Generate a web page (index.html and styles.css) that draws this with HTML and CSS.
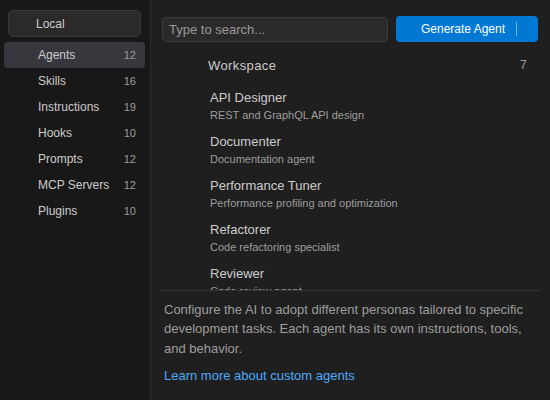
FILE: index.html
```html
<!DOCTYPE html>
<html lang="en">
<head>
  <meta charset="UTF-8" />
  <title>Agents</title>
  <link rel="stylesheet" href="styles.css">
</head>
<body>

  <aside class="sidebar">
    <div class="source">Local</div>
    <ul class="nav">
      <li class="nav-item active"><span>Agents</span><span class="count">12</span></li>
      <li class="nav-item"><span>Skills</span><span class="count">16</span></li>
      <li class="nav-item"><span>Instructions</span><span class="count">19</span></li>
      <li class="nav-item"><span>Hooks</span><span class="count">10</span></li>
      <li class="nav-item"><span>Prompts</span><span class="count">12</span></li>
      <li class="nav-item"><span>MCP Servers</span><span class="count">12</span></li>
      <li class="nav-item"><span>Plugins</span><span class="count">10</span></li>
    </ul>
  </aside>

  <main class="content">
    <div class="toolbar">
      <input class="search" type="text" placeholder="Type to search...">
      <button class="generate">
        <span class="generate-label">Generate Agent</span>
        <span class="generate-drop"></span>
      </button>
    </div>

    <div class="list">
      <div class="group-head">
        <span>Workspace</span>
        <span class="group-count">7</span>
      </div>
      <div class="agent">
        <div class="agent-name">API Designer</div>
        <div class="agent-desc">REST and GraphQL API design</div>
      </div>
      <div class="agent">
        <div class="agent-name">Documenter</div>
        <div class="agent-desc">Documentation agent</div>
      </div>
      <div class="agent">
        <div class="agent-name">Performance Tuner</div>
        <div class="agent-desc">Performance profiling and optimization</div>
      </div>
      <div class="agent">
        <div class="agent-name">Refactorer</div>
        <div class="agent-desc">Code refactoring specialist</div>
      </div>
      <div class="agent">
        <div class="agent-name">Reviewer</div>
        <div class="agent-desc">Code review agent</div>
      </div>
    </div>

    <div class="about">
      <p>Configure the AI to adopt different personas tailored to specific development tasks. Each agent has its own instructions, tools, and behavior.</p>
      <a href="#" class="learn">Learn more about custom agents</a>
    </div>
  </main>

</body>
</html>
```

FILE: styles.css
```css
body {
  margin: 0;
  display: flex;
  height: 400px;
  overflow: hidden;
  background: #1f1f1f;
  color: #cccccc;
  font-family: 'Liberation Sans', Arial, sans-serif;
}

/* left column */
.sidebar {
  width: 151px;
  flex-shrink: 0;
  box-sizing: border-box;
  padding: 10px 5px 10px 4px;
  background: #181818;
  border-right: 1px solid #2b2b2b;
}

.source {
  margin: 0 4px;
  height: 27px;
  box-sizing: border-box;
  padding-left: 27px;
  display: flex;
  align-items: center;
  font-size: 12px;
  color: #cccccc;
  background: #2a2a2a;
  border: 1px solid #3a3a3a;
  border-radius: 5px;
}

.nav {
  list-style: none;
  margin: 5px 0 0;
  padding: 0;
}

.nav-item {
  height: 26px;
  display: flex;
  align-items: center;
  justify-content: space-between;
  padding: 0 9px 0 34px;
  font-size: 12px;
  border-radius: 4px;
}

.nav-item.active {
  background: #37373d;
}

.count {
  font-size: 11px;
  color: #9d9d9d;
}

/* right column */
.content {
  flex: 1;
  min-width: 0;
  display: flex;
  flex-direction: column;
}

.toolbar {
  display: flex;
  align-items: center;
  gap: 8px;
  padding: 16px 12px 0 11px;
}

.search {
  flex: 1;
  height: 25px;
  box-sizing: border-box;
  padding: 0 6px;
  background: #2a2a2a;
  border: 1px solid #3c3c3c;
  border-radius: 4px;
  color: #cccccc;
  font-family: inherit;
  font-size: 13px;
  outline: none;
}

.search::placeholder {
  color: #9a9a9a;
}

.generate {
  width: 142px;
  height: 26px;
  display: flex;
  align-items: center;
  padding: 0;
  background: #0078d4;
  border: none;
  border-radius: 4px;
  color: #ffffff;
  font-family: inherit;
  font-size: 12px;
}

.generate-label {
  flex: 1;
  padding-left: 14px;
  text-align: center;
}

.generate-drop {
  width: 21px;
  height: 14px;
  border-left: 1px solid rgba(255, 255, 255, 0.45);
}

.list {
  flex: 1;
  overflow: hidden;
  padding-top: 8px;
}

.group-head {
  height: 30px;
  display: flex;
  align-items: center;
  justify-content: space-between;
  padding: 0 23px 0 57px;
  font-size: 13px;
  letter-spacing: 0.4px;
}

.group-count {
  font-size: 12px;
  color: #9d9d9d;
}

.agent {
  padding: 9px 0 1px 59px;
}

.agent-name {
  font-size: 13px;
  line-height: 17px;
}

.agent-desc {
  margin-top: 2px;
  font-size: 11px;
  line-height: 15px;
  color: #9d9d9d;
}

.about {
  margin: 0 10px 0 9px;
  padding: 0 4px 14px;
  border-top: 1px solid #333333;
  font-size: 13px;
}

.about p {
  margin: 9px 0 0;
  line-height: 19.5px;
  color: #9d9d9d;
}

.learn {
  display: block;
  margin-top: 8px;
  line-height: 20px;
  color: #4daafc;
  text-decoration: none;
}
```
